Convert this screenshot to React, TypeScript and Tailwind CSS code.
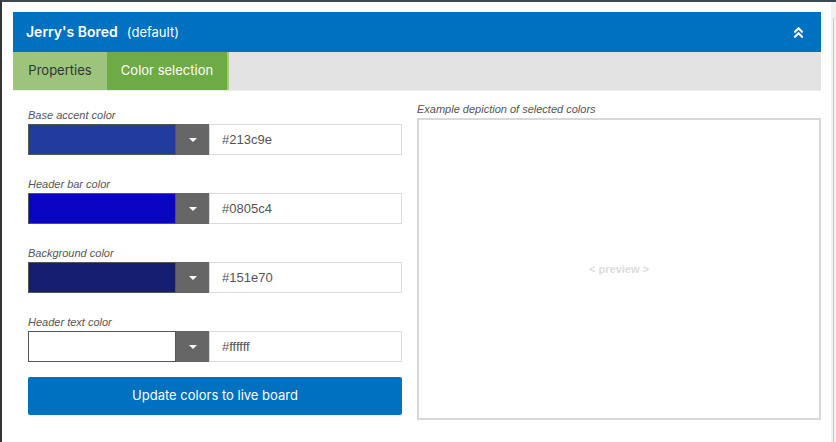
import { ChevronsUp } from "lucide-react";

const rows = [
  { label: "Base accent color", color: "#213c9e" },
  { label: "Header bar color", color: "#0805c4" },
  { label: "Background color", color: "#151e70" },
  { label: "Header text color", color: "#ffffff" },
];

const poppins = { fontFamily: "Inter, 'Open Sans', sans-serif" };

function ColorRow({ label, color }: { label: string; color: string }) {
  return (
    <div className="mb-[23px]">
      <p className="mb-[2px] text-[11px] italic leading-[13px] text-[#555]">{label}</p>
      <div className="flex h-[31px]">
        <div className="w-[148px] border border-[#555]" style={{ backgroundColor: color }} />
        <div className="flex w-[33px] items-center justify-center bg-[#666]">
          <span className="h-0 w-0 border-x-[4px] border-t-[4px] border-x-transparent border-t-white" />
        </div>
        <div className="flex flex-1 items-center border border-[#dcdcdc] pl-[12px] text-[13px] text-[#555]">
          {color}
        </div>
      </div>
    </div>
  );
}

export default function App() {
  return (
    <div
      className="flex h-[442px] w-[836px] overflow-hidden border-l-2 border-t-2 border-l-[#333] border-t-[#3b4853] bg-white"
      style={{ fontFamily: "'Liberation Sans', Arial, sans-serif" }}
    >
      <div className="flex-1 pl-[11px] pr-[10px] pt-[10px]">
        <div className="flex h-[40px] items-center justify-between bg-[#0070c0] pl-[13px] pr-[14px] text-white" style={poppins}>
          <div className="flex items-baseline">
            <span className="text-[14px] font-semibold">Jerry's Bored</span>
            <span className="ml-[9px] text-[13px]">(default)</span>
          </div>
          <ChevronsUp size={17} strokeWidth={3} />
        </div>
        <div className="flex h-[39px] border-b border-[#efefef] bg-[#e3e3e3] text-[13px]" style={poppins}>
          <div className="flex w-[94px] items-center justify-center bg-[#9cc47d] text-[#333]">Properties</div>
          <div className="flex w-[122px] items-center justify-center border-r-2 border-[#a2ca86] bg-[#6dab45] text-white">
            Color selection
          </div>
        </div>
        <div className="flex gap-[15px] pl-[15px] pt-[12px]">
          <div className="w-[374px] pt-[6px]">
            {rows.map((r) => (
              <ColorRow key={r.label} label={r.label} color={r.color} />
            ))}
            <button
              className="-mt-[8px] flex h-[38px] w-full items-center justify-center rounded-[2px] bg-[#0070c0] text-[13px] text-white"
              style={poppins}
            >
              Update colors to live board
            </button>
          </div>
          <div className="flex-1">
            <p className="mb-[2px] text-[11px] italic leading-[13px] text-[#555]">Example depiction of selected colors</p>
            <div className="flex h-[302px] items-center justify-center border-2 border-[#d8d8d8]">
              <span className="text-[11px] font-bold text-[#dcdcdc]">&lt; preview &gt;</span>
            </div>
          </div>
        </div>
      </div>
      <div className="w-[5px] bg-[#f1f1f1]">
        <div className="ml-[2px] mt-[16px] h-full w-[1px] bg-[#c8c8c8]" />
      </div>
    </div>
  );
}
